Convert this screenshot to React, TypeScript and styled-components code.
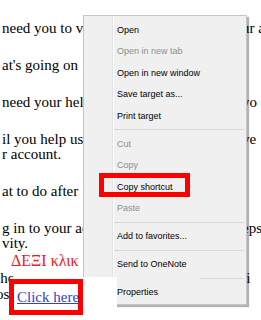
import styled, { createGlobalStyle } from "styled-components";

const GlobalStyle = createGlobalStyle`
    html, body {
        margin: 0;
        padding: 0;
        background: #ffffff;
    }
    body {
        width: 261px;
        height: 320px;
        overflow: hidden;
    }
`;

type Kind = "text" | "note" | "tail";

interface LineData {
    left: string;
    right?: string;
    kind?: Kind;
    shift?: number;
}

// page text, grouped by paragraph (left part visible, right part peeking past the menu)
const paragraphs: LineData[][] = [
    [{ left: "need you to verify", right: "ur a" }],
    [{ left: "at's going on" }],
    [{ left: "need your help", right: "yo" }],
    [{ left: "il you help us", right: "ve" }, { left: "r account." }],
    [{ left: "at to do after" }],
    [
        { left: "g in to your acc", right: "eps" },
        { left: "vity." },
        { left: "ΔΕΞΙ κλικ", kind: "note", shift: 9 },
        { left: "the", right: "li", shift: -6 },
        { left: "os", kind: "tail", shift: -6 },
    ],
];

interface MenuEntry {
    label?: string;
    disabled?: boolean;
    separator?: boolean;
    inset?: number;
}

const menu: MenuEntry[] = [
    { label: "Open" },
    { label: "Open in new tab", disabled: true },
    { label: "Open in new window" },
    { label: "Save target as..." },
    { label: "Print target" },
    { separator: true },
    { label: "Cut", disabled: true },
    { label: "Copy", disabled: true },
    { label: "Copy shortcut" },
    { label: "Paste", disabled: true },
    { separator: true },
    { label: "Add to favorites..." },
    { separator: true },
    { label: "Send to OneNote" },
    { separator: true, inset: 116 },
    { label: "Properties" },
];

export default function App() {
    return (
        <Screen>
            <GlobalStyle />
            <PageText>
                {paragraphs.map((para, pi) => (
                    <Paragraph key={pi}>
                        {para.map((l, i) => (
                            <Line key={i} $kind={l.kind || "text"} $shift={l.shift || 0}>
                                <span>{l.left}</span>
                                {l.right && <RightBit>{l.right}</RightBit>}
                            </Line>
                        ))}
                    </Paragraph>
                ))}
            </PageText>

            <ContextMenu>
                {menu.map((m, i) =>
                    m.separator ? (
                        <Separator key={i} $inset={m.inset || 30} />
                    ) : (
                        <MenuItem key={i} $disabled={!!m.disabled}>
                            {m.label}
                        </MenuItem>
                    )
                )}
            </ContextMenu>

            <ShortcutMark />

            <LinkPatch>
                <LinkMark>
                    <LinkText href="#">Click here</LinkText>
                </LinkMark>
            </LinkPatch>
        </Screen>
    );
}

const Screen = styled.div`
    position: relative;
    width: 261px;
    height: 320px;
    overflow: hidden;
    background: #ffffff;
`;

const PageText = styled.div`
    display: flex;
    flex-direction: column;
    gap: 22px;
    padding: 21px 0 0 2px;
    font-family: "Liberation Serif", "Times New Roman", serif;
    font-size: 15px;
    color: #000000;
`;

const Paragraph = styled.div`
    display: flex;
    flex-direction: column;
`;

const Line = styled.div<{ $kind: Kind; $shift: number }>`
    display: flex;
    align-items: baseline;
    height: ${p => (p.$kind === "note" ? 20 : p.$kind === "tail" ? 17 : 15)}px;
    line-height: ${p => (p.$kind === "note" ? 20 : p.$kind === "tail" ? 17 : 15)}px;
    margin-left: ${p => p.$shift}px;
    color: ${p => (p.$kind === "note" ? "#ee1c1c" : "#000000")};
    font-size: ${p => (p.$kind === "note" ? 16 : 15)}px;
    white-space: nowrap;
`;

const RightBit = styled.span`
    margin-left: auto;
    width: 19px;
    flex: none;
    white-space: nowrap;
    overflow: hidden;
`;

const ContextMenu = styled.div`
    position: absolute;
    left: 83px;
    top: 15px;
    width: 164px;
    box-sizing: border-box;
    padding: 3px 2px 1px 0;
    border: 1px solid #c6c6c6;
    background: linear-gradient(
        to right,
        #f0f0f0 28px,
        #e2e3e3 28px,
        #e2e3e3 29px,
        #ffffff 29px,
        #ffffff 30px,
        #f0f0f0 30px
    );
    box-shadow: 2px 2px 1px rgba(0, 0, 0, 0.3);
    font-family: "Liberation Sans", Arial, sans-serif;
    font-size: 9px;
    z-index: 2;
`;

const MenuItem = styled.div<{ $disabled: boolean }>`
    height: 21.5px;
    display: flex;
    align-items: center;
    padding-left: 33px;
    color: ${p => (p.$disabled ? "#8e8e8e" : "#000000")};
    white-space: nowrap;
`;

const Separator = styled.div<{ $inset: number }>`
    height: 1px;
    margin: 2.5px 0 3px ${p => p.$inset}px;
    background: #d7d7d7;
`;

const ShortcutMark = styled.div`
    position: absolute;
    left: 99px;
    top: 173px;
    width: 91px;
    height: 24px;
    box-sizing: border-box;
    border: 5px solid #ff0000;
    z-index: 3;
`;

const LinkPatch = styled.div`
    position: absolute;
    left: 12px;
    top: 277px;
    width: 105px;
    height: 43px;
    background: #ffffff;
    z-index: 4;
`;

const LinkMark = styled.div`
    position: absolute;
    left: -3px;
    top: 2px;
    width: 74px;
    height: 36px;
    box-sizing: border-box;
    border: 5px solid #ff0000;
    display: flex;
    align-items: center;
    padding-left: 3px;
`;

const LinkText = styled.a`
    font-family: "Liberation Serif", "Times New Roman", serif;
    font-size: 15px;
    color: #2f43c4;
    text-decoration: underline;
    white-space: nowrap;
`;
